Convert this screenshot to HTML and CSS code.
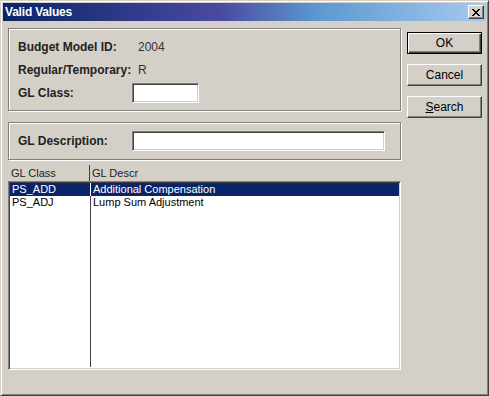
FILE: index.html
```html
<!DOCTYPE html>
<html lang="en">

<head>
    <meta charset="UTF-8">
    <title>Valid Values</title>
    <link rel="stylesheet" href="styles.css">
</head>

<body>
    <div class="window">
        <div class="titlebar">
            <span class="title">Valid Values</span>
            <span class="close">
                <svg width="8" height="7" viewBox="0 0 8 7">
                    <path d="M0 0h2v1h1v1h2v-1h1v-1h2v1h-1v1h-1v1h-1v1h1v1h1v1h1v1h-2v-1h-1v-1h-2v1h-1v1h-2v-1h1v-1h1v-1h1v-1h-1v-1h-1v-1h-1z" fill="#000"/>
                </svg>
            </span>
        </div>
        <div class="main">
            <div class="left">
                <div class="group group-top">
                    <span class="label">Budget Model ID:</span>
                    <span class="value">2004</span>
                    <span class="label">Regular/Temporary:</span>
                    <span class="value">R</span>
                    <span class="label">GL Class:</span>
                    <span class="field field-short"></span>
                </div>
                <div class="group group-desc">
                    <span class="label">GL Description:</span>
                    <span class="field field-long"></span>
                </div>
                <div class="list-head">
                    <span class="col col-class">GL Class</span>
                    <span class="col col-descr">GL Descr</span>
                </div>
                <div class="list">
                    <div class="row selected">
                        <span class="col col-class">PS_ADD</span>
                        <span class="col col-descr">Additional Compensation</span>
                    </div>
                    <div class="row">
                        <span class="col col-class">PS_ADJ</span>
                        <span class="col col-descr">Lump Sum Adjustment</span>
                    </div>
                    <div class="row filler">
                        <span class="col col-class"></span>
                        <span class="col col-descr"></span>
                    </div>
                </div>
            </div>
            <div class="buttons">
                <span class="btn btn-default">OK</span>
                <span class="btn">Cancel</span>
                <span class="btn"><u>S</u>earch</span>
            </div>
        </div>
    </div>
</body>

</html>
```

FILE: styles.css
```css
* {
    margin: 0;
    padding: 0;
    box-sizing: border-box;
}

body {
    font-family: "Liberation Sans", Arial, sans-serif;
    font-size: 11px;
    color: #000;
    background: #d4d0c8;
}

.window {
    width: 489px;
    height: 396px;
    background: #d4d0c8;
    border: 1px solid;
    border-color: #d4d0c8 #404040 #404040 #d4d0c8;
    box-shadow: inset 1px 1px #fff, inset -1px -1px #808080;
    padding: 2px;
    display: flex;
    flex-direction: column;
}

.titlebar {
    height: 18px;
    background: linear-gradient(to right, #0a246a 0%, #4a4aa0 45%, #5c98d0 65%, #a6caf0 100%);
    display: flex;
    align-items: center;
    justify-content: space-between;
    padding: 0 2px 0 2px;
}

.title {
    color: #fff;
    font-weight: bold;
    font-size: 12px;
    letter-spacing: -0.2px;
}

.close {
    width: 16px;
    height: 14px;
    background: #d4d0c8;
    border: 1px solid;
    border-color: #fff #404040 #404040 #fff;
    box-shadow: inset -1px -1px #808080;
    display: flex;
    align-items: center;
    justify-content: center;
}

.main {
    flex: 1;
    display: flex;
    gap: 6px;
    padding: 7px 4px 0 5px;
}

.left {
    width: 393px;
    display: flex;
    flex-direction: column;
}

.group {
    border: 1px solid #808080;
    box-shadow: inset 1px 1px #fff, 1px 1px #fff;
}

.group-top {
    height: 83px;
    display: grid;
    grid-template-columns: 114px 1fr;
    grid-template-rows: 24px 22px 24px;
    align-items: center;
    padding: 6px 0 0 9px;
}

.group-desc {
    height: 38px;
    margin-top: 11px;
    display: grid;
    grid-template-columns: 114px 1fr;
    align-items: center;
    padding: 0 0 0 9px;
}

.label {
    font-weight: bold;
    font-size: 12px;
    color: #222;
}

.value {
    padding-left: 6px;
    font-size: 12px;
    color: #333;
}

.field {
    height: 20px;
    background: #fff;
    border: 1px solid;
    border-color: #808080 #fff #fff #808080;
    box-shadow: inset 1px 1px #404040, inset -1px -1px #d4d0c8;
}

.field-short {
    width: 67px;
}

.field-long {
    width: 253px;
}

.list-head {
    margin-top: 5px;
    height: 16px;
    display: flex;
    color: #222;
}

.list-head .col {
    padding-top: 2px;
}

.col-class {
    width: 81px;
    padding-left: 3px;
}

.col-descr {
    flex: 1;
    padding-left: 2px;
    border-left: 1px solid #404040;
}

.list {
    height: 189px;
    background: #fff;
    border: 1px solid;
    border-color: #808080 #fff #fff #808080;
    box-shadow: inset 1px 1px #404040, inset -1px -1px #d4d0c8;
    padding: 1px 1px 2px 1px;
    display: flex;
    flex-direction: column;
}

.row {
    height: 13px;
    line-height: 13px;
    display: flex;
}

.list .col-class {
    width: 80px;
    padding-left: 2px;
}

.row.selected {
    background: #0a246a;
    color: #fff;
}

.row.selected .col-descr {
    border-left-color: #fff;
}

.row.filler {
    flex: 1;
}

.buttons {
    width: 75px;
    display: flex;
    flex-direction: column;
    gap: 10px;
    padding-top: 4px;
}

.btn {
    height: 22px;
    display: flex;
    align-items: center;
    justify-content: center;
    font-size: 12px;
    background: #d4d0c8;
    border: 1px solid;
    border-color: #fff #404040 #404040 #fff;
    box-shadow: inset -1px -1px #808080;
}

.btn-default {
    border: 1px solid #000;
    box-shadow: inset 1px 1px #fff, inset -1px -1px #404040, inset -2px -2px #808080;
}

.btn u {
    text-decoration: underline;
}
```
